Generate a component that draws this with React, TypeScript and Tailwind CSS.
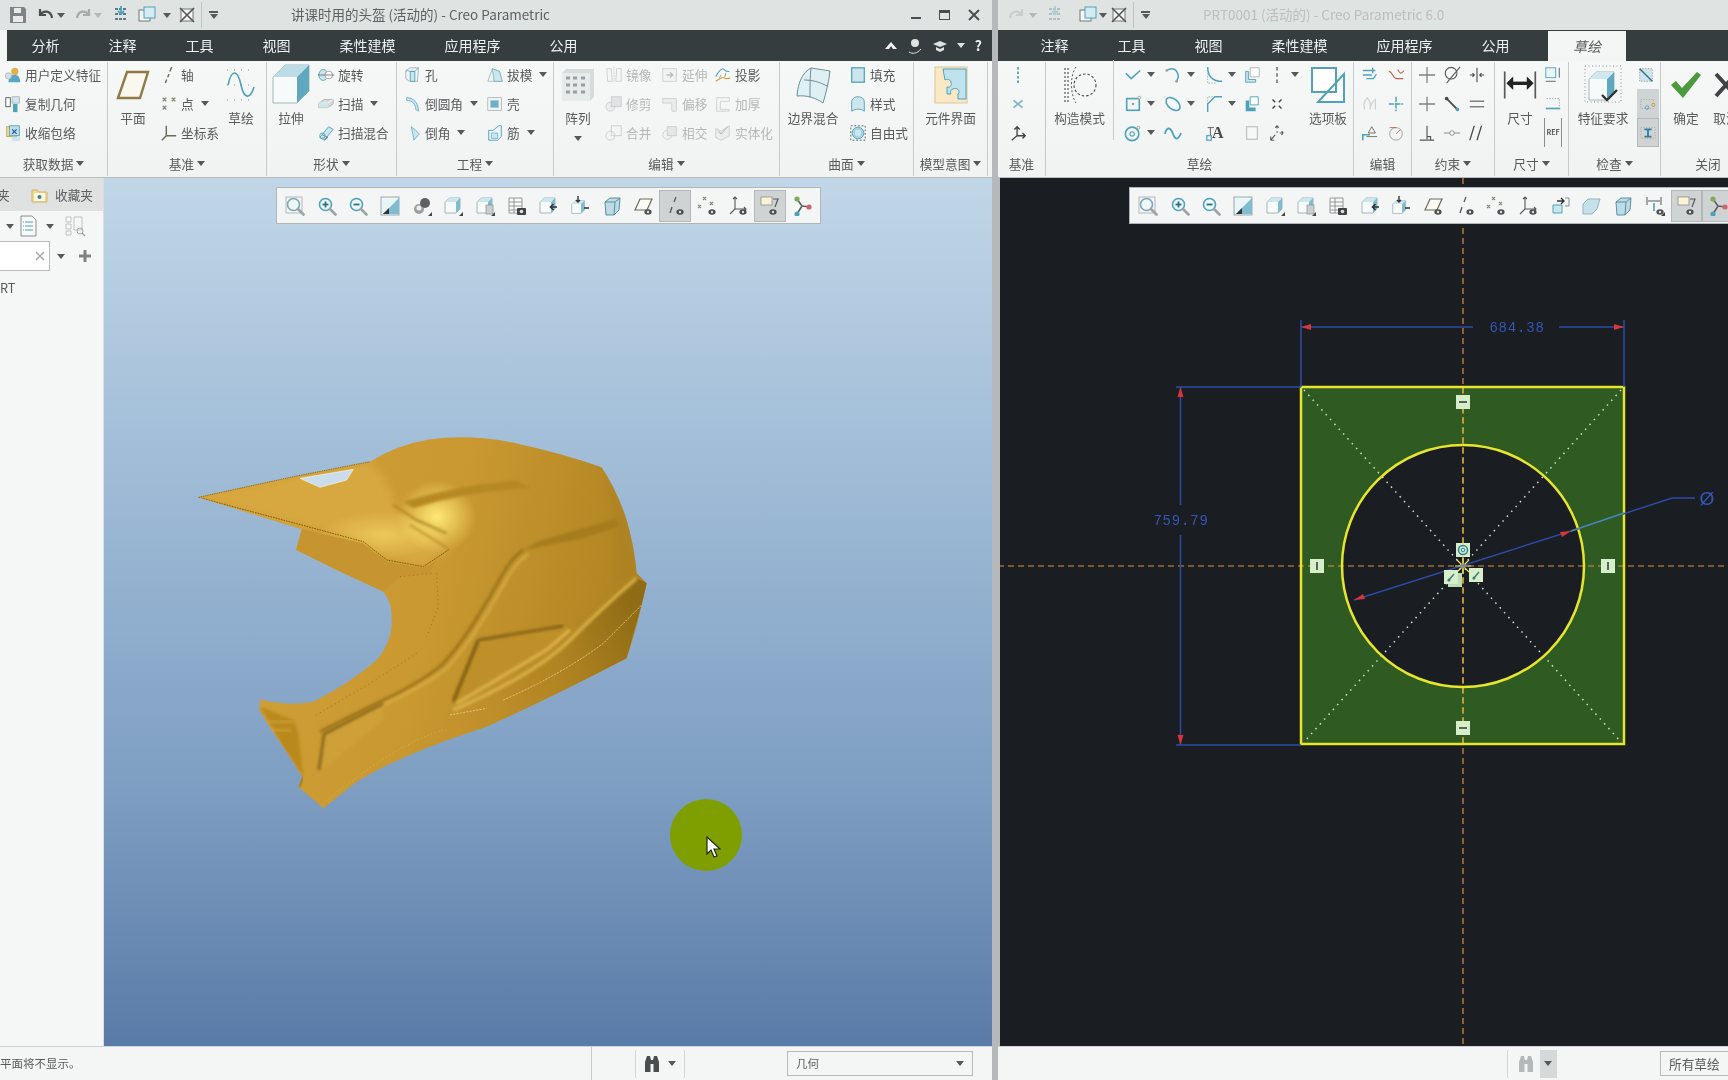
import type { ReactNode } from 'react'
import clsx from 'clsx'

const T = '#4fa2bb'
const L = '#cde6ee'
const D = '#55595a'
const G = '#9a9e9e'

function Svg({ s = 18, box = 20, children }: { s?: number; box?: number; children: ReactNode }) {
  return (
    <svg width={s} height={s} viewBox={`0 0 ${box} ${box}`} fill="none" className="shrink-0">
      {children}
    </svg>
  )
}

function Caret({ className }: { className?: string }) {
  return (
    <span
      className={clsx(
        'inline-block h-0 w-0 shrink-0 border-x-[4px] border-t-[5px] border-x-transparent border-t-[#55595a]',
        className,
      )}
    />
  )
}

const Eye = ({ x = 15, y = 16 }: { x?: number; y?: number }) => (
  <>
    <ellipse cx={x} cy={y} rx="3.6" ry="2.8" fill="#4a4e4f" />
    <circle cx={x} cy={y} r="1.2" fill="#dfe3e3" />
  </>
)
const Corner = () => <path d="M20 20h-4l4-4z" fill="#444" />
const Cube = () => (
  <>
    <path d="M2 6l4-4h11v11l-4 4H2z" fill="#f7fbfc" stroke="#8fa5ad" strokeWidth=".8" />
    <path d="M2 6l4-4h11l-4 4z" fill={L} />
    <path d="M13 6l4-4v11l-4 4z" fill="#7fbcd0" />
  </>
)
const Glass = ({ sign }: { sign?: '+' | '-' }) => (
  <>
    <circle cx="8.5" cy="8.5" r="6" fill="#eef7fa" stroke={sign ? T : '#7fa5b2'} strokeWidth="1.6" />
    <path d="M13 13l5.5 5.5" stroke="#9aa3a5" strokeWidth="2.6" strokeLinecap="round" />
    {sign && <path d="M5.5 8.5h6" stroke="#2b6f88" strokeWidth="1.8" />}
    {sign === '+' && <path d="M8.5 5.5v6" stroke="#2b6f88" strokeWidth="1.8" />}
  </>
)

const icons: Record<string, ReactNode> = {
  udf: (
    <>
      <circle cx="12" cy="6" r="4" fill="#e0b04a" />
      <path d="M5 18c0-6 3-8 7-8s6 3 6 8z" fill="#5aa6c4" />
      <circle cx="5" cy="11" r="3.5" fill="#cfe3ea" stroke={G} strokeWidth=".6" />
    </>
  ),
  copyGeom: (
    <>
      <rect x="2" y="3" width="5" height="10" fill="#fff" stroke={D} />
      <rect x="9" y="2" width="8" height="7" fill={L} stroke={G} strokeWidth=".7" />
      <rect x="10" y="10" width="5" height="9" fill={T} />
    </>
  ),
  shrink: (
    <>
      <rect x="3" y="3" width="11" height="11" fill="#f3dc9b" stroke="#c9a24c" />
      <rect x="6" y="2" width="11" height="11" fill="#bfe0ea" stroke={T} />
      <path d="M9 6l5 5M14 6l-5 5" stroke="#2a5a9c" strokeWidth="1.4" />
      <rect x="9" y="14" width="9" height="5" fill={L} />
    </>
  ),
  axis: <path d="M13 1l-2 5M10 9l-1.4 3.5M7.4 15l-1.4 4" stroke="#6d6a58" strokeWidth="1.6" />,
  point: <path d="M3 3l4 4M7 3l-4 4M13 3l4 4M17 3l-4 4M3 12l4 4M7 12l-4 4" stroke="#8c8a78" strokeWidth="1.5" />,
  csys: <path d="M7 2v11l-5 5M7 13h11" stroke="#6d6a58" strokeWidth="1.6" />,
  revolve: (
    <>
      <ellipse cx="7" cy="10" rx="5" ry="6" fill={L} stroke={T} />
      <rect x="9" y="6" width="8" height="8" rx="3" fill="#fff" stroke={G} />
      <path d="M1 10h18" stroke={D} strokeWidth=".8" />
    </>
  ),
  sweep: (
    <>
      <path d="M2 9l6-4h10v5l-6 4H2z" fill="#d6dadb" stroke={G} strokeWidth=".7" />
      <path d="M2 9h10l6-4" stroke="#fff" />
      <path d="M2 9v5h10V9z" fill={L} />
    </>
  ),
  blend: (
    <>
      <path d="M3 15L13 3l5 3L8 18z" fill={L} stroke={T} />
      <path d="M6 12l6 3-4 3" stroke={D} strokeWidth=".8" />
      <circle cx="6" cy="13" r="3" stroke={T} />
    </>
  ),
  hole: (
    <>
      <path d="M2 5l5-3h9l-1 15H6L2 14z" fill="#eef5f7" stroke={G} strokeWidth=".8" />
      <path d="M7 6h5v11H7z" fill={L} stroke={T} />
      <path d="M2 5l5 1 5 0 4-4" stroke={T} strokeWidth=".8" />
    </>
  ),
  round: (
    <>
      <path d="M3 3h8l6 6v9l-7-2-7-8z" fill="#f1f4f5" />
      <path d="M3 3c7 0 13 5 13 15l-3-2c0-6-4-10-10-10z" fill={L} stroke={T} strokeWidth=".8" />
    </>
  ),
  chamfer: (
    <>
      <path d="M3 8l5-5 9 7-6 8-8-5z" fill="#f1f4f5" />
      <path d="M8 3l4 3 5 5-6 7-1-6z" fill={L} stroke={T} strokeWidth=".8" />
    </>
  ),
  draft: (
    <>
      <path d="M2 17l5-14 8 3 3 11z" fill="#edf6f9" stroke={G} strokeWidth=".7" />
      <path d="M7 3l8 3 3 11H9z" fill={L} stroke={T} strokeWidth=".7" />
    </>
  ),
  shell: (
    <>
      <rect x="2" y="3" width="15" height="14" fill="#eef3f5" stroke={G} strokeWidth=".7" />
      <rect x="5" y="6" width="9" height="8" fill="#6fb0c6" />
    </>
  ),
  rib: (
    <>
      <path d="M3 7h5l6-5h3v12l-4 4H3z" fill="#eef5f7" stroke={T} />
      <path d="M6 10h7v6H6z" fill={L} stroke={T} strokeWidth=".7" />
    </>
  ),
  mirror: (
    <>
      <path d="M2 3h5l1 14H3zM12 17l1-14h5v14z" stroke={G} />
      <path d="M10 1v18" stroke={G} strokeDasharray="2 1" />
    </>
  ),
  trim: (
    <>
      <circle cx="6" cy="13" r="5" fill="#dfe3e3" stroke={G} />
      <rect x="7" y="2" width="11" height="11" fill="#c9cdce" stroke={G} />
    </>
  ),
  merge: (
    <>
      <circle cx="6" cy="13" r="5" stroke={G} />
      <rect x="7" y="2" width="11" height="11" stroke={G} />
    </>
  ),
  extend: (
    <>
      <rect x="2" y="3" width="15" height="14" fill="#eef0f0" stroke={G} />
      <path d="M6 10h7M10 7l3 3-3 3" stroke="#777" strokeWidth="1.4" />
    </>
  ),
  offset: <path d="M2 4h15v14h-5V9H2z" fill="#e1e4e4" stroke={G} />,
  intersect: (
    <>
      <circle cx="7" cy="12" r="5" stroke={G} />
      <rect x="7" y="3" width="10" height="10" fill="#d4d8d8" stroke={G} />
    </>
  ),
  project: (
    <>
      <path d="M2 12c3-7 7-9 8-9s2 4 7 3" stroke={T} strokeWidth="1.2" />
      <path d="M2 17c3-2 7-5 9-4s3 2 7 0" stroke="#d49a2d" strokeWidth="1.2" />
      <path d="M6 13l2-3M12 12l1-4" stroke={D} strokeWidth=".7" />
    </>
  ),
  thicken: <path d="M3 3h14v4H7v9h10v2H3z" stroke={G} />,
  solidify: (
    <>
      <path d="M2 5l6 3 9-6v11l-9 5-6-3z" fill="#e4e7e7" stroke={G} />
      <path d="M5 8l3 3 7-8" stroke="#888" strokeWidth="1.4" />
    </>
  ),
  fill: <rect x="3" y="2" width="14" height="16" fill={L} stroke={T} strokeWidth="1.4" />,
  style: <path d="M3 18V8c0-4 3-6 7-6s7 2 7 6v10c-4-3-10-3-14 0z" fill={L} stroke={T} />,
  free: (
    <>
      <rect x="2" y="2" width="16" height="16" stroke={D} strokeDasharray="2 2" />
      <circle cx="10" cy="10" r="6.5" fill="#a9d2e0" stroke={T} />
      <circle cx="10" cy="10" r="3.5" fill={L} />
    </>
  ),
  ln: <path d="M2 8l6 6 10-9" stroke={T} strokeWidth="1.8" />,
  arc3: (
    <>
      <path d="M3 5c6-4 12-2 13 7l-2 5" stroke={T} strokeWidth="1.6" />
      <circle cx="3" cy="5" r="1.5" fill={G} />
      <circle cx="14" cy="17" r="1.5" fill={G} />
    </>
  ),
  fillet: (
    <>
      <path d="M3 1c0 11 6 16 16 16" stroke={T} strokeWidth="1.6" />
      <path d="M3 8v11h9" stroke={G} strokeDasharray="1.5 1.5" />
    </>
  ),
  offs: (
    <>
      <path d="M8 2h10v10H8z" fill="#fff" stroke={G} strokeWidth=".8" />
      <path d="M3 6v12h11v-3H6V6z" fill={L} stroke={T} />
    </>
  ),
  cline: <path d="M10 1v4M10 8v4M10 15v4" stroke={D} strokeWidth="1.5" />,
  rect: (
    <>
      <rect x="3" y="4" width="14" height="13" stroke={T} strokeWidth="1.8" />
      <circle cx="10" cy="10" r="1.4" fill={G} />
      <circle cx="17" cy="3" r="1.6" fill="#fff" stroke={G} />
    </>
  ),
  ellipse: <ellipse cx="10" cy="10" rx="9" ry="5.5" transform="rotate(40 10 10)" stroke={T} strokeWidth="1.8" fill="#f4fafb" />,
  chamf: (
    <>
      <path d="M3 19V10l8-8h8" stroke={T} strokeWidth="1.6" />
      <path d="M3 10V2h8" stroke={G} strokeDasharray="1.5 1.5" />
    </>
  ),
  thick: (
    <>
      <path d="M8 2h9v9H8z" fill="#fff" stroke={T} />
      <path d="M3 6v12h11v-4H7V6z" fill={T} />
    </>
  ),
  ptX: <path d="M5 5l3 3M15 5l-3 3M5 15l3-3M15 15l-3-3" stroke="#444" strokeWidth="1.6" />,
  circle: (
    <>
      <circle cx="9" cy="11" r="7.5" stroke={T} strokeWidth="1.8" />
      <circle cx="9" cy="11" r="2.4" stroke={T} strokeWidth="1.2" />
      <circle cx="16" cy="4" r="1.6" fill="#fff" stroke={G} />
    </>
  ),
  wave: <path d="M1 11c2-8 6-8 9 0s6 6 9-1" stroke={T} strokeWidth="2" />,
  textA: (
    <>
      <path d="M3 4h7M6 4v9" stroke={D} />
      <rect x="2" y="13" width="5" height="5" fill="#fff" stroke={T} strokeWidth="1.4" />
    </>
  ),
  stack: <rect x="4" y="3" width="12" height="14" fill="#f6f8f8" stroke="#c5c9c9" strokeWidth="1.6" />,
  move: <path d="M10 2v3M10 8v2M13 10h3M17 10l-2-2M17 10l-2 2M8 12l-5 6M3 18v-4M3 18h4M8 4l2-2 2 2" stroke={D} strokeWidth="1.2" />,
  cdatum: <path d="M10 1v3M10 6v3M10 11v3M10 16v3" stroke={T} strokeWidth="2" />,
  cpoint: <path d="M5 6l10 8M15 6L5 14" stroke="#7fb5c8" strokeWidth="2" />,
  csys2: <path d="M9 3v10L3 18M9 13h9M6 6l3-3 3 3M15 10l3 3-3 3" stroke="#3f4344" strokeWidth="1.5" />,
  ed1: <path d="M2 5h14M2 10h10M6 14h8l3-5M13 2v6" stroke={T} strokeWidth="1.4" />,
  ed2: <path d="M2 6c4 0 5 8 8 8M10 14h8M12 4c2 4 3 6 7 1" stroke="#c0614f" strokeWidth="1.2" />,
  ed3: <path d="M4 16c-2-6 0-10 3-13 3 3 4 8 3 13M10 16c1-6 3-9 6-11v11" stroke="#cfd3d3" strokeWidth="1.4" />,
  ed4: <path d="M10 2v16M2 10h16" stroke={T} strokeWidth="1.6" strokeDasharray="6 1" />,
  ed5: (
    <>
      <path d="M2 18v-6h8" stroke={T} strokeWidth="1.8" />
      <path d="M8 10l4-7 4 7zM6 14h12" stroke="#6d6a58" strokeWidth="1" />
    </>
  ),
  ed6: (
    <>
      <circle cx="10" cy="11" r="7" stroke={G} />
      <path d="M10 11l5-5M3 4h7" stroke="#c0614f" />
    </>
  ),
  con1: <path d="M10 1v18M1 10h18" stroke="#7d8182" strokeWidth="1.4" />,
  con2: (
    <>
      <circle cx="9" cy="8" r="6.5" stroke="#55595a" strokeWidth="1.2" />
      <path d="M4 19L19 1" stroke="#55595a" strokeWidth="1.2" />
    </>
  ),
  con3: <path d="M10 2v16M2 10h5M18 10h-5M5 8l2 2-2 2M15 8l-2 2 2 2" stroke="#45494a" strokeWidth="1.2" />,
  con4: <path d="M1 10h18M10 2v16" stroke="#7d8182" strokeWidth="1.4" />,
  con5: (
    <>
      <path d="M3 3l14 14" stroke="#45494a" strokeWidth="2" />
      <circle cx="4" cy="4" r="2" fill="#45494a" />
      <circle cx="16" cy="16" r="2" fill={T} />
    </>
  ),
  con6: <path d="M2 7h16M2 13h16" stroke="#7d8182" strokeWidth="1.8" />,
  con7: <path d="M10 2v15M2 18h16M10 14h4v4" stroke="#55595a" strokeWidth="1.3" />,
  con8: (
    <>
      <path d="M1 10h18" stroke="#7d8182" />
      <circle cx="10" cy="10" r="2.5" fill="#fff" stroke="#7d8182" />
    </>
  ),
  con9: <path d="M7 2L2 18M15 2l-5 16" stroke="#45494a" strokeWidth="1.4" />,
  dim1: (
    <>
      <path d="M1 2v16M19 2v16" stroke={D} />
      <path d="M3 9h14" stroke="#222" strokeWidth="2" />
      <path d="M2 9l4-4v8zM18 9l-4-4v8z" fill="#222" />
    </>
  ),
  dim2: (
    <>
      <rect x="2" y="2" width="11" height="11" fill="#eaf5f8" stroke={T} />
      <path d="M17 2v11M2 17h11" stroke={D} />
    </>
  ),
  dim3: (
    <>
      <path d="M3 4h14v9" stroke={G} strokeDasharray="1.5 1.5" />
      <path d="M2 15h16" stroke={T} strokeWidth="1.8" />
    </>
  ),
  chk1: (
    <>
      <rect x="3" y="3" width="14" height="14" fill="#cfe5ec" stroke={G} strokeDasharray="1.5 1.5" />
      <path d="M3 3l14 14" stroke="#3a6d85" strokeWidth="1.6" />
    </>
  ),
  chk2: (
    <>
      <path d="M2 5h14v10H2z" stroke={G} strokeDasharray="1 2" />
      <circle cx="9" cy="14" r="2" stroke={T} />
      <circle cx="16" cy="11" r="1.8" stroke="#d49a2d" />
    </>
  ),
  chk3: (
    <>
      <path d="M2 4h16v12H2z" stroke={G} strokeDasharray="1 2" />
      <path d="M6 6h8M6 14h8M10 6v8" stroke="#2f7f9c" strokeWidth="2" />
    </>
  ),
  fit: (
    <>
      <rect x="1" y="1" width="16" height="16" fill="#f4f6f6" stroke="#b3b7b7" />
      <Glass />
    </>
  ),
  zin: <Glass sign="+" />,
  zout: <Glass sign="-" />,
  repaint: (
    <>
      <rect x="1" y="1" width="18" height="18" fill="#eaf5f8" stroke="#9aa7ab" />
      <path d="M19 2L3 18h16z" fill="#7fbcd0" />
      <path d="M9 12l-6 6h6z" fill="#333" />
    </>
  ),
  shade: (
    <>
      <circle cx="7" cy="13" r="5" fill="#9b9f9f" />
      <circle cx="13" cy="7" r="5" fill="#5d6162" />
      <circle cx="7" cy="12" r="2.5" fill="#eceeee" />
      <Corner />
    </>
  ),
  view: (
    <>
      <Cube />
      <Corner />
    </>
  ),
  viewdoc: (
    <>
      <Cube />
      <rect x="11" y="9" width="7" height="9" fill="#c9cfd0" stroke="#8a8e8e" strokeWidth=".7" />
      <Corner />
    </>
  ),
  table: (
    <>
      <path d="M2 2h13v15H2zM2 6h13M2 10h13M2 14h13M7 2v15" stroke="#8a8e8e" strokeWidth=".9" fill="#f7f8f8" />
      <rect x="10" y="12" width="9" height="7" rx="1" fill="#3f4344" />
      <circle cx="14.5" cy="15.5" r="1.8" fill="#dfe3e3" />
    </>
  ),
  cubeL: (
    <>
      <Cube />
      <path d="M13 11h6M15.500 8l-3 3 3 3" stroke="#333" strokeWidth="1.6" />
    </>
  ),
  cubeT: (
    <>
      <g transform="translate(0 3) scale(.85)">
        <Cube />
      </g>
      <path d="M8 0v6M6 4l2 2 2-2M14 12h5" stroke="#333" strokeWidth="1.4" />
    </>
  ),
  wire: (
    <>
      <path d="M3 6l5-4h10l-1 12-5 5H4z" fill="#bcdbe6" stroke="#5d8fa2" />
      <path d="M3 6h10l5-4M13 6l-1 13" stroke="#5d8fa2" />
    </>
  ),
  planeEye: (
    <>
      <path d="M2 14L7 3h12l-5 11z" stroke="#6a6a5a" strokeWidth="1.2" fill="#fbfaf4" />
      <Eye />
    </>
  ),
  axisEye: (
    <>
      <path d="M11 1L9 6M7 11l-2 6" stroke="#55595a" strokeWidth="1.3" />
      <Eye />
    </>
  ),
  ptEye: (
    <>
      <path d="M6 1l3 3M9 1L6 4M13 6l3 3M16 6l-3 3M1 9l3 3M4 9l-3 3" stroke="#8c8a78" strokeWidth="1.2" />
      <Eye />
    </>
  ),
  csysEye: (
    <>
      <path d="M7 1v12L2 18M7 13h11M5 3l2-2 2 2M16 11l2 2-2 2" stroke="#55595a" strokeWidth="1.1" />
      <Eye />
    </>
  ),
  annotEye: (
    <>
      <rect x="1" y="1" width="11" height="8" fill="#fbf3d6" stroke="#8a8e8e" strokeWidth=".8" />
      <path d="M13 3h5l-3 8" stroke="#55595a" strokeWidth="1.2" />
      <Eye x={13} />
    </>
  ),
  spin: (
    <>
      <path d="M10 10L5 3M10 10l8 1M10 10l-5 8" stroke="#5d6162" strokeWidth="1.6" />
      <circle cx="5" cy="3" r="2.6" fill="#7faa5a" />
      <circle cx="17" cy="11" r="2.6" fill="#d0656a" />
      <circle cx="5" cy="18" r="2.6" fill={T} />
    </>
  ),
  orient: (
    <>
      <path d="M3 9h9v8H3z" fill={L} stroke={T} />
      <path d="M7 5h7M11 2l3 3-3 3" stroke="#333" strokeWidth="1.4" />
      <path d="M15 2h4v8h-4" stroke="#8a8e8e" />
    </>
  ),
  section: <path d="M2 8l5-5h12l-3 10-5 5H2z" fill="#c6e1ea" stroke="#8fb5c2" />,
  dimEye: (
    <>
      <path d="M2 1v8M16 1v8M3 5h12" stroke="#55595a" />
      <path d="M9 7v8" stroke={T} strokeWidth="1.6" />
      <Eye />
      <Corner />
    </>
  ),
}

function Ico({ n, s = 18, off }: { n: string; s?: number; off?: boolean }) {
  return (
    <span className={clsx('flex shrink-0', off && 'opacity-45')}>
      <Svg s={s}>{icons[n]}</Svg>
    </span>
  )
}

function Group({
  label,
  arrow,
  className,
  children,
}: {
  label?: string
  arrow?: boolean
  className?: string
  children: ReactNode
}) {
  return (
    <div className={clsx('flex h-[114px] shrink-0 flex-col border-r border-[#c6cac9]', className)}>
      <div className="-mt-[2px] flex h-[91px]">{children}</div>
      <div className="flex flex-1 items-center justify-center gap-[3px]">
        {label}
        {arrow && <Caret />}
      </div>
    </div>
  )
}

function Small({
  n,
  text,
  arrow,
  off,
  gap = 'gap-[3px]',
}: {
  n: string
  text: string
  arrow?: boolean
  off?: boolean
  gap?: string
}) {
  return (
    <div className={clsx('flex h-[29px] items-center whitespace-nowrap', gap, off && 'text-[#b4b8b8]')}>
      <Ico n={n} off={off} />
      <span>{text}</span>
      {arrow && <Caret className="ml-[4px]" />}
    </div>
  )
}

function Big({
  icon,
  text,
  arrow,
  className,
}: {
  icon: ReactNode
  text: string
  arrow?: boolean
  className?: string
}) {
  return (
    <div className={clsx('flex shrink-0 flex-col items-center whitespace-nowrap pt-[4px]', className)}>
      <div className="flex h-[42px] items-center justify-center">{icon}</div>
      <span className="mt-[3px] leading-[18px]">{text}</span>
      {arrow && <Caret className="mt-[9px]" />}
    </div>
  )
}

function Col({ className, children }: { className?: string; children: ReactNode }) {
  return <div className={clsx('flex shrink-0 flex-col', className)}>{children}</div>
}

function Cell({ n, arrow, off }: { n?: string; arrow?: boolean; off?: boolean }) {
  return (
    <div className="flex h-[29px] items-center gap-[5px]">
      {n && <Ico n={n} off={off} />}
      {arrow && <Caret />}
    </div>
  )
}

function Tab({ children }: { children: ReactNode }) {
  return <span className="shrink-0 px-[24.5px] text-[14px] text-[#eef1f1]">{children}</span>
}

function ToolBtn({ n, on }: { n: string; on?: boolean }) {
  return (
    <div
      className={clsx(
        'flex h-[32px] w-[31.7px] shrink-0 items-center justify-center',
        on && 'border border-[#b4b8b8] bg-[#cfd3d3]',
      )}
    >
      <Ico n={n} s={20} />
    </div>
  )
}

function Toolbar({ items, on, className }: { items: string[]; on: string[]; className?: string }) {
  return (
    <div
      className={clsx(
        'absolute top-[9px] flex h-[37px] items-center border border-[#aeb6ba] bg-[#f4f6f6] px-[2px]',
        className,
      )}
    >
      {items.map((n) => (
        <ToolBtn key={n} n={n} on={on.includes(n)} />
      ))}
    </div>
  )
}

const Extrude = () => (
  <svg width="40" height="44" viewBox="0 0 40 44" fill="none">
    <path d="M2 14L14 2h24v26L26 40H2z" fill="#f6fafb" stroke="#a4b6bc" />
    <path d="M2 14L14 2h24L26 14z" fill="#bcdde8" />
    <path d="M26 14L38 2v26L26 40z" fill="#5fa8c0" />
  </svg>
)

const BigPlane = () => (
  <svg width="34" height="30" viewBox="0 0 34 30" fill="none">
    <path d="M2 28L11 2h21l-8 26z" fill="#faf8ee" stroke="#8d7a45" strokeWidth="2.4" />
  </svg>
)

const BigSketch = () => (
  <svg width="30" height="34" viewBox="0 0 30 34" fill="none">
    <path d="M2 17c4-18 10-14 13 0s9 15 13 2" stroke={T} strokeWidth="1.6" />
    <path d="M1 2h28M1 17h28M1 32h28" stroke="#8b8f8f" strokeWidth="1" strokeDasharray="1 6" />
  </svg>
)

const BigPattern = () => (
  <svg width="34" height="36" viewBox="0 0 34 36" fill="none">
    <path d="M1 6l4-4h28v28l-4 4H1z" fill="#d7dbdb" />
    <path d="M1 6h28v28H1z" fill="#e8ebeb" />
    <path d="M5 11h4M12 11h4M20 11h4M5 18h4M12 18h4M20 18h4M5 25h4M12 25h4M20 25h4" stroke="#9a9e9e" strokeWidth="3" />
  </svg>
)

const BigBoundary = () => (
  <svg width="36" height="38" viewBox="0 0 36 38" fill="none">
    <path d="M2 30C3 16 8 6 16 2c7 1 13 2 19 3-1 10-4 22-7 32-7-5-16-8-26-7z" fill="#dff0f5" stroke="#6f8d97" />
    <path d="M9 14c8 0 16 2 23 6M16 2c-1 9-1 18-1 29" stroke="#6f8d97" />
  </svg>
)

const BigPuzzle = () => (
  <svg width="34" height="38" viewBox="0 0 34 38" fill="none">
    <rect x="1" y="1" width="32" height="36" fill="#fbe9c5" stroke="#d9c69a" />
    <path d="M9 3h23v30H24v-5c3-3-1-7-5-5-3 1-3 3-2 5h-4v-7c3 1 5-1 4-5-1-3-4-3-6-2z" fill="#bfe3ee" stroke={T} />
  </svg>
)

const BigConstruct = () => (
  <svg width="36" height="38" viewBox="0 0 36 38" fill="none">
    <path d="M3 2v34M6 2v34" stroke="#555" strokeWidth="1.2" strokeDasharray="2 2" />
    <path d="M14 1C8 9 8 28 14 37" stroke="#555" strokeDasharray="2 2" />
    <circle cx="23" cy="19" r="11" stroke="#444" strokeWidth="1.1" strokeDasharray="2.500 2" />
  </svg>
)

const BigPalette = () => (
  <svg width="36" height="38" viewBox="0 0 36 38" fill="none">
    <rect x="2" y="2" width="24" height="24" fill="#fff" stroke={T} strokeWidth="2" />
    <path d="M34 8v28H8z" fill="#fff" stroke={T} strokeWidth="2" />
    <path d="M26 16v10H15" stroke={T} strokeWidth="2" />
  </svg>
)

const BigFeatReq = () => (
  <svg width="38" height="40" viewBox="0 0 38 40" fill="none">
    <rect x="1" y="1" width="36" height="36" stroke="#8a8e8e" strokeDasharray="1 2.500" />
    <path d="M5 14l7-7h18v21l-7 7H5z" fill="#f6fafb" stroke="#a4b6bc" />
    <path d="M23 14l7-7v21l-7 7z" fill="#5fa8c0" />
    <path d="M5 14l7-7h18l-7 7z" fill="#cfe7ef" />
    <path d="M18 30l5 5 10-10" stroke="#333" strokeWidth="2.4" />
  </svg>
)

const BigCheck = () => (
  <svg width="32" height="28" viewBox="0 0 32 28" fill="none">
    <path d="M1 14l5-4 6 7L27 1l4 3-18 23z" fill="#4c9a3c" />
  </svg>
)

const BigX = () => (
  <svg width="24" height="26" viewBox="0 0 24 26" fill="none">
    <path d="M2 2l20 22M22 2L2 24" stroke="#3f4344" strokeWidth="4" />
  </svg>
)

const Binoculars = () => (
  <svg width="16" height="18" viewBox="0 0 16 18" fill="none">
    <path d="M1 17V7l2-6h3l1 4h2l1-4h3l2 6v10H9.500V9h-3v8z" fill="currentColor" />
  </svg>
)

function TitleIcon({ kind, off }: { kind: 'save' | 'undo' | 'redo' | 'regen' | 'win' | 'close'; off?: boolean }) {
  return (
    <span className={clsx('flex w-[20px] shrink-0 justify-center', off && 'opacity-35')}>
      <svg width="18" height="18" viewBox="0 0 18 18" fill="none">
        {kind === 'save' && (
          <>
            <path d="M1 1h14l2 2v14H1z" fill="#7f8385" />
            <rect x="5" y="2" width="7" height="5" fill="#e8eaea" />
            <rect x="4" y="10" width="10" height="6" fill="#e8eaea" />
          </>
        )}
        {kind === 'undo' && <path d="M3 3v6h6M3 9c3-5 11-5 12 3" stroke="#4a4e4f" strokeWidth="2.2" />}
        {kind === 'redo' && <path d="M15 3v6H9M15 9c-3-5-11-5-12 3" stroke="#a6aaaa" strokeWidth="2.2" />}
        {kind === 'regen' && (
          <>
            <path d="M3 3h12M3 8h12M3 13h12" stroke="#5a7d8a" strokeWidth="2" strokeDasharray="3 1" />
            <path d="M9 0v8M6 5l3 3 3-3" stroke={T} strokeWidth="1.8" />
          </>
        )}
        {kind === 'win' && (
          <>
            <rect x="1" y="4" width="11" height="11" fill="#f3f5f5" stroke="#777" />
            <rect x="6" y="1" width="11" height="11" fill="#d5ebf2" stroke={T} />
          </>
        )}
        {kind === 'close' && (
          <>
            <rect x="3" y="3" width="12" height="12" fill="#f3f5f5" stroke="#777" />
            <path d="M2 2l14 14M16 2L2 16" stroke="#555" strokeWidth="1.6" />
          </>
        )}
      </svg>
    </span>
  )
}

function Helmet() {
  const body =
    'M85 262L370 200L600 155Q680 105 780 88Q900 72 1030 98Q1180 130 1295 172Q1340 240 1370 330Q1395 420 1400 490L1430 520Q1405 640 1370 745Q1150 860 950 950Q700 1030 560 1115L460 1195L385 1130L397 1100Q340 1010 295 945L268 900L270 868Q350 890 430 875Q540 820 620 750Q670 690 665 620Q665 575 640 545L500 480L378 420L395 358Z'
  return (
    <svg
      width="500"
      height="420"
      viewBox="0 0 1500 1260"
      className="absolute left-[66px] top-[232px]"
      fill="none"
    >
      <defs>
        <linearGradient id="hb" x1="0" y1="0" x2="1" y2="0.2">
          <stop offset="0" stopColor="#d3a23a" />
          <stop offset="0.6" stopColor="#c99830" />
          <stop offset="1" stopColor="#b08422" />
        </linearGradient>
        <radialGradient id="hl" cx="0.5" cy="0.5" r="0.5">
          <stop offset="0" stopColor="#ffe875" stopOpacity="1" />
          <stop offset="1" stopColor="#ffe875" stopOpacity="0" />
        </radialGradient>
        <linearGradient id="hback" gradientUnits="userSpaceOnUse" x1="840" y1="900" x2="1430" y2="650">
          <stop offset="0" stopColor="#c4932d" />
          <stop offset="0.55" stopColor="#b08422" />
          <stop offset="1" stopColor="#8f6b15" />
        </linearGradient>
        <filter id="soft">
          <feGaussianBlur stdDeviation="4" />
        </filter>
        <filter id="soft2">
          <feGaussianBlur stdDeviation="12" />
        </filter>
        <clipPath id="hc">
          <path d={body} />
        </clipPath>
      </defs>
      <path d={body} fill="url(#hb)" />
      <g clipPath="url(#hc)">
        <path d="M1295 172Q1340 240 1370 330L1400 490L1330 540L1340 330Z" fill="#ad8222" filter="url(#soft2)" />
        <path d="M1400 505L1432 520L1370 745Q1150 860 950 950Q880 975 800 1000L840 905Q1080 800 1190 700Q1300 590 1400 505Z" fill="url(#hback)" />
        <path d="M1400 505Q1300 590 1190 700Q1080 800 850 900" stroke="#dcb54c" strokeWidth="9" filter="url(#soft)" />
        <path d="M85 262L370 200L600 155L640 200L680 290L840 418L760 470L650 450L580 395L395 345Z" fill="#d8a83f" filter="url(#soft2)" />
        <ellipse cx="800" cy="320" rx="120" ry="110" fill="url(#hl)" />
        <ellipse cx="640" cy="375" rx="190" ry="70" fill="url(#hl)" opacity="0.5" />
        <path d="M395 358L580 400L650 455L760 475L800 450L780 490L690 500L640 545L500 480L378 420Z" fill="#c7952f" />
        <path d="M85 262L395 345L580 395L650 450L760 470L838 418" stroke="#7e5d10" strokeWidth="3" strokeDasharray="5 3" />
        <path d="M700 275Q860 225 1040 212L1085 235Q900 240 730 295Z" fill="#b68823" filter="url(#soft)" />
        <path d="M670 285L740 330L830 370" stroke="#a97e1e" strokeWidth="6" filter="url(#soft)" />
        <path d="M838 418L720 345" stroke="#b68823" strokeWidth="5" filter="url(#soft)" />
        <path d="M1340 325L1100 395L1060 420L1240 385L1345 350Z" fill="#a67c1e" filter="url(#soft)" />
        <path d="M1060 420Q1030 440 1005 480Q960 560 920 625Q860 720 810 770Q740 825 620 880L450 965" stroke="#8f6a14" strokeWidth="7" filter="url(#soft)" />
        <path d="M1075 432Q1048 450 1020 490Q975 570 935 635Q875 730 825 780Q750 835 630 890" stroke="#d9ad46" strokeWidth="7" filter="url(#soft)" />
        <path d="M920 690L1180 645L1200 660L1130 720L850 885L845 860Z" fill="#bf9029" />
        <path d="M925 690L1180 648" stroke="#76570f" strokeWidth="7" filter="url(#soft)" />
        <path d="M925 690L850 875" stroke="#76570f" strokeWidth="9" filter="url(#soft)" />
        <path d="M860 880L1130 720L1200 660" stroke="#e0b64e" strokeWidth="9" filter="url(#soft)" />
        <path d="M460 970L640 880L640 930L450 1085Z" fill="#cf9f38" filter="url(#soft)" />
        <path d="M640 880L462 972L447 1080" stroke="#6f5210" strokeWidth="6" filter="url(#soft)" />
        <path d="M270 890L370 930L385 970L400 1100L340 1010Z" fill="#b9891f" filter="url(#soft)" />
        <path d="M290 935H370M300 960L365 962" stroke="#dfb650" strokeWidth="3" filter="url(#soft)" />
        <path d="M385 1130L397 1100" stroke="#8f6a14" strokeWidth="8" filter="url(#soft)" />
        <path d="M460 1180Q520 1130 620 1060Q760 970 830 960" stroke="#e3c26a" strokeWidth="2" strokeDasharray="3 8" />
        <path d="M840 915L950 895M1000 870Q1180 790 1300 700L1420 580" stroke="#ecd48b" strokeWidth="2.500" strokeDasharray="6 4" />
        <path d="M800 490L805 590L770 680M690 500L790 490M740 730L600 820L430 920" stroke="#8a6512" strokeWidth="2.500" strokeDasharray="3 10" opacity="0.8" />
      </g>
      <path d="M390 205L550 178L530 210L450 232Z" fill="#cbdcec" stroke="#f4f4ea" strokeWidth="2" />
      <path d="M85 262L370 200L600 155" stroke="#8f6a14" strokeWidth="3" strokeDasharray="4 3" />
    </svg>
  )
}

function Sketch() {
  const blue = '#2c4ba6'
  const red = '#d8353b'
  return (
    <svg
      width="728"
      height="868"
      viewBox="1000 178 728 868"
      className="absolute inset-0"
      fill="none"
    >
      <path
        fillRule="evenodd"
        d="M1301 387H1624V744H1301ZM1463 445A121 121 0 1 0 1463.010 687A121 121 0 1 0 1463 445Z"
        fill="#2f5a22"
      />
      <path d="M1304 390L1621 742M1621 390L1304 742" stroke="#cfe0c8" strokeWidth="1.500" strokeDasharray="1.500 5" />
      <path d="M998 566H1728M1463 178V1046" stroke="#d9913f" strokeWidth="1.200" strokeDasharray="6 4" />
      <path d="M1463 387V744" stroke="#d9b83a" strokeWidth="1.200" strokeDasharray="6 4" />
      <rect x="1301" y="387" width="323" height="357" stroke="#e6e62e" strokeWidth="2.500" />
      <circle cx="1463" cy="566" r="121" stroke="#e6e62e" strokeWidth="2.500" />
      <path d="M1301 320V387M1624 320V387M1176 387H1301M1176 745H1301" stroke={blue} strokeWidth="1.500" />
      <path d="M1301 327H1473M1559 327H1624M1180.500 387V505M1180.500 535V745" stroke={blue} strokeWidth="1.500" />
      <path d="M1354 600L1571 531L1672 498H1695" stroke={blue} strokeWidth="1.500" />
      <path d="M1571 531L1624 513" stroke="#4a8a9c" strokeWidth="1.500" />
      <path d="M1301 327l10-3v6zM1624 327l-10-3v6zM1180.500 387l-3 10h6zM1180.500 745l-3-10h6zM1354 600l9-6 2 5zM1571 531l-9 6-2-5z" fill={red} />
      <text x="1517" y="332" textAnchor="middle" fill="#3555b4" className="font-['Liberation_Mono',monospace] text-[14px] tracking-[0.8px]">
        684.38
      </text>
      <text x="1181" y="525" textAnchor="middle" fill="#3555b4" className="font-['Liberation_Mono',monospace] text-[14px] tracking-[0.8px]">
        759.79
      </text>
      <text x="1707" y="505" textAnchor="middle" fill="#3555b4" className="font-['Liberation_Sans',sans-serif] text-[19px]">
        Ø
      </text>
      <g stroke="#2a3a2a" strokeWidth="1.500">
        <rect x="1456" y="395" width="14" height="14" fill="#d7eecb" stroke="none" />
        <path d="M1459 402h8" />
        <rect x="1456" y="721" width="14" height="14" fill="#d7eecb" stroke="none" />
        <path d="M1459 728h8" />
        <rect x="1310" y="559" width="14" height="14" fill="#d7eecb" stroke="none" />
        <path d="M1317 562v8" />
        <rect x="1601" y="559" width="14" height="14" fill="#d7eecb" stroke="none" />
        <path d="M1608 562v8" />
      </g>
      <path d="M1455 566h16M1463 558v16M1457 560l12 12M1469 560l-12 12" stroke="#e8e070" strokeWidth="1.200" />
      <circle cx="1463" cy="566" r="2.500" fill="#8a8f80" />
      <rect x="1456" y="543" width="14" height="14" fill="#d7eecb" />
      <circle cx="1463" cy="550" r="4.500" stroke="#2f7f9c" strokeWidth="1.500" />
      <circle cx="1463" cy="550" r="1.800" stroke="#2f7f9c" />
      <rect x="1448" y="573" width="14" height="14" fill="#bcdcb4" />
      <rect x="1444" y="570" width="14" height="14" fill="#d7eecb" />
      <rect x="1469" y="568" width="14" height="14" fill="#d7eecb" />
      <path d="M1448 581l6-7M1473 579l6-7" stroke="#3f7f78" strokeWidth="1.500" />
      <circle cx="1449" cy="580" r="1.500" fill="#3f7f78" />
      <circle cx="1474" cy="578" r="1.500" fill="#3f7f78" />
    </svg>
  )
}

export default function App() {
  return (
    <div className="flex h-[1080px] w-[1728px] overflow-hidden bg-[#f3f6f5] font-['Noto_Sans_CJK_SC','Noto_Sans',sans-serif] text-[12.700px] text-[#565a5a] blur-[0.35px]">
      {/* left window */}
      <div className="flex h-full w-[992px] shrink-0 flex-col overflow-hidden">
        <div className="flex h-[30px] shrink-0 items-center bg-[#dfe3e1] pl-[8px]">
          <TitleIcon kind="save" />
          <span className="w-[8px]" />
          <TitleIcon kind="undo" />
          <Caret className="ml-[1px]" />
          <span className="w-[8px]" />
          <TitleIcon kind="redo" />
          <Caret className="ml-[1px] opacity-30" />
          <span className="w-[9px]" />
          <TitleIcon kind="regen" />
          <span className="w-[6px]" />
          <TitleIcon kind="win" />
          <Caret className="ml-[6px]" />
          <span className="w-[6px]" />
          <TitleIcon kind="close" />
          <span className="mx-[4px] h-[26px] w-px bg-[#bfc3c2]" />
          <span className="ml-[3px] flex flex-col items-center gap-[1px]">
            <span className="h-[2px] w-[9px] bg-[#55595a]" />
            <Caret />
          </span>
          <span className="-mt-[2px] ml-[73px] whitespace-nowrap text-[13.500px] text-[#5d6161]">
            讲课时用的头盔 (活动的) - Creo Parametric
          </span>
          <div className="ml-auto flex items-center gap-[18px] pr-[12px] text-[#4a4e4f]">
            <span className="mt-[6px] h-[2px] w-[10px] bg-[#4a4e4f]" />
            <span className="h-[10px] w-[11px] border border-t-[3px] border-[#4a4e4f]" />
            <svg width="12" height="12" viewBox="0 0 12 12" fill="none">
              <path d="M1 1l10 10M11 1L1 11" stroke="#4a4e4f" strokeWidth="2" />
            </svg>
          </div>
        </div>
        <div className="flex h-[31px] shrink-0 items-center bg-[#353d3f]">
          <span className="h-full w-[7px] shrink-0 bg-[#f3f6f5]" />
          <Tab>分析</Tab>
          <Tab>注释</Tab>
          <Tab>工具</Tab>
          <Tab>视图</Tab>
          <Tab>柔性建模</Tab>
          <Tab>应用程序</Tab>
          <Tab>公用</Tab>
          <div className="ml-auto flex items-center gap-[10px] pr-[10px] text-[#eef1f1]">
            <svg width="12" height="8" viewBox="0 0 12 8">
              <path d="M6 0l6 7H8L6 4 4 7H0z" fill="#f3f6f5" />
            </svg>
            <svg width="16" height="18" viewBox="0 0 16 18" fill="none">
              <circle cx="8" cy="6" r="4" fill="#dfe3e1" />
              <path d="M2 15c3 2 8 2 12-3" stroke="#dfe3e1" />
            </svg>
            <svg width="14" height="12" viewBox="0 0 14 12">
              <path d="M7 1l7 3-7 3-7-3zM3 7l4 2 4-2v3l-4 2-4-2z" fill="#dfe3e1" />
            </svg>
            <Caret className="border-t-[#dfe3e1]" />
            <span className="text-[14px] font-bold">?</span>
          </div>
        </div>
        <div className="flex h-[117px] shrink-0 border-b border-[#b9bdbc] bg-gradient-to-b from-[#f6f8f7] to-[#f0f3f2] pt-px">
          <Group label="获取数据" arrow className="w-[108px] overflow-hidden">
            <Col className="pl-[4px]">
              <Small n="udf" text="用户定义特征" />
              <Small n="copyGeom" text="复制几何" />
              <Small n="shrink" text="收缩包络" />
            </Col>
          </Group>
          <Group label="基准" arrow className="w-[159px]">
            <Big icon={<BigPlane />} text="平面" className="w-[50px]" />
            <Col className="ml-[2px] w-[55px]">
              <Small n="axis" text="轴" />
              <Small n="point" text="点" arrow />
              <Small n="csys" text="坐标系" />
            </Col>
            <Big icon={<BigSketch />} text="草绘" className="w-[52px]" />
          </Group>
          <Group label="形状" arrow className="w-[130px]">
            <Big icon={<Extrude />} text="拉伸" className="w-[48px]" />
            <Col className="ml-[2px]">
              <Small n="revolve" text="旋转" />
              <Small n="sweep" text="扫描" arrow />
              <Small n="blend" text="扫描混合" />
            </Col>
          </Group>
          <Group label="工程" arrow className="w-[157px]">
            <Col className="ml-[7px] w-[82px]">
              <Small n="hole" text="孔" />
              <Small n="round" text="倒圆角" arrow />
              <Small n="chamfer" text="倒角" arrow />
            </Col>
            <Col>
              <Small n="draft" text="拔模" arrow />
              <Small n="shell" text="壳" />
              <Small n="rib" text="筋" arrow />
            </Col>
          </Group>
          <Group label="编辑" arrow className="w-[226px]">
            <Big icon={<BigPattern />} text="阵列" arrow className="w-[48px]" />
            <Col className="ml-[3px] w-[56px]">
              <Small n="mirror" text="镜像" off />
              <Small n="trim" text="修剪" off />
              <Small n="merge" text="合并" off />
            </Col>
            <Col className="w-[53px]">
              <Small n="extend" text="延伸" off />
              <Small n="offset" text="偏移" off />
              <Small n="intersect" text="相交" off />
            </Col>
            <Col>
              <Small n="project" text="投影" />
              <Small n="thicken" text="加厚" off />
              <Small n="solidify" text="实体化" off />
            </Col>
          </Group>
          <Group label="曲面" arrow className="w-[134px]">
            <Big icon={<BigBoundary />} text="边界混合" className="w-[66px]" />
            <Col className="ml-[3px]">
              <Small n="fill" text="填充" />
              <Small n="style" text="样式" />
              <Small n="free" text="自由式" />
            </Col>
          </Group>
          <Group label="模型意图" arrow className="w-[74px]">
            <Big icon={<BigPuzzle />} text="元件界面" className="w-full" />
          </Group>
        </div>
        <div className="flex min-h-0 flex-1">
          <div className="flex w-[104px] shrink-0 flex-col overflow-hidden border-r border-[#d9dedf] bg-[#f5f7f6]">
            <div className="flex h-[33px] shrink-0 items-center bg-[#dfe2e1] text-[#5d6161]">
              <span className="-ml-[3px] w-[34px] overflow-hidden whitespace-nowrap">夹</span>
              <svg width="17" height="16" viewBox="0 0 17 16" className="shrink-0">
                <path d="M1 3h5l2 2h8v10H1z" fill="#f1d98f" stroke="#d0b56a" />
                <rect x="3" y="6" width="11" height="8" fill="#fbf6e2" />
                <circle cx="8.500" cy="10" r="2" fill="#3f7f9c" />
              </svg>
              <span className="ml-[7px] whitespace-nowrap">收藏夹</span>
            </div>
            <div className="flex h-[30px] shrink-0 items-center pl-[6px]">
              <Caret />
              <svg width="17" height="22" viewBox="0 0 17 22" fill="none" className="ml-[6px]">
                <path d="M1 1h11l4 4v16H1z" fill="#f7f8f8" stroke="#8a8e8e" />
                <path d="M5 7h8M5 11h8M5 15h8M3 7h1M3 11h1M3 15h1" stroke={T} />
              </svg>
              <Caret className="ml-[9px]" />
              <svg width="22" height="22" viewBox="0 0 22 22" fill="none" className="ml-[10px] opacity-50">
                <path d="M2 2h5v5H2zM2 9h5v5H2zM2 16h5v4H2zM10 2h8v13h-8z" stroke="#8a8e8e" />
                <circle cx="16" cy="16" r="3" stroke="#555" />
                <path d="M18 18l3 3" stroke="#555" strokeWidth="1.500" />
              </svg>
            </div>
            <div className="flex h-[30px] shrink-0 items-center">
              <div className="flex h-[30px] w-[50px] items-center justify-end border border-l-0 border-[#b7bbbb] bg-white pr-[4px]">
                <svg width="10" height="10" viewBox="0 0 10 10" fill="none">
                  <path d="M1 1l8 8M9 1L1 9" stroke="#a4a8a8" strokeWidth="1.400" />
                </svg>
              </div>
              <Caret className="ml-[7px]" />
              <svg width="12" height="12" viewBox="0 0 12 12" className="ml-[14px]">
                <path d="M4.500 0h3v4.500H12v3H7.500V12h-3V7.500H0v-3h4.500z" fill="#7f8384" />
              </svg>
            </div>
            <div className="mt-[7px] text-[#565a5a]">RT</div>
          </div>
          <div className="relative min-w-0 flex-1 overflow-hidden bg-[linear-gradient(180deg,#c1d7e8_0%,#a6c1da_27%,#7f9fc3_69%,#5a7ba7_100%)]">
            <Toolbar
              className="left-[172px]"
              items={['fit', 'zin', 'zout', 'repaint', 'shade', 'view', 'viewdoc', 'table', 'cubeL', 'cubeT', 'wire', 'planeEye', 'axisEye', 'ptEye', 'csysEye', 'annotEye', 'spin']}
              on={['axisEye', 'annotEye']}
            />
            <Helmet />
            <div className="absolute left-[566px] top-[621px] h-[72px] w-[72px] rounded-full bg-[#7f9f00]" />
            <svg width="16" height="24" viewBox="0 0 16 24" className="absolute left-[602px] top-[658px]">
              <path d="M1 1v17l4-4 3 7 3-1-3-7h6z" fill="#fff" stroke="#1f2a10" strokeWidth="1.200" />
            </svg>
          </div>
        </div>
        <div className="flex h-[34px] shrink-0 items-center border-t border-[#cfd3d3] bg-[#f3f6f5] text-[11.500px]">
          <span className="w-[591px] shrink-0 whitespace-nowrap">平面将不显示。</span>
          <span className="h-full w-px bg-[#c6cac9]" />
          <div className="ml-[43px] flex h-[28px] w-[50px] items-center justify-center gap-[8px] border-x border-[#d5d9d9] text-[#4a4e4f]">
            <Binoculars />
            <Caret />
          </div>
          <div className="ml-[102px] flex h-[25px] w-[186px] items-center justify-between border border-[#b7bbbb] px-[8px] text-[#5d6161]">
            几何
            <Caret />
          </div>
        </div>
      </div>
      <div className="h-full w-[6px] shrink-0 bg-[#b5b9bb]" />
      {/* right window */}
      <div className="flex h-full min-w-0 flex-1 flex-col overflow-hidden">
        <div className="flex h-[30px] shrink-0 items-center bg-[#dfe3e1] pl-[8px]">
          <TitleIcon kind="redo" off />
          <Caret className="ml-[3px] opacity-30" />
          <span className="w-[8px]" />
          <TitleIcon kind="regen" off />
          <span className="w-[13px]" />
          <TitleIcon kind="win" />
          <Caret className="ml-[1px]" />
          <span className="w-[2px]" />
          <TitleIcon kind="close" />
          <span className="mx-[4px] h-[26px] w-px bg-[#bfc3c2]" />
          <span className="ml-[3px] flex flex-col items-center gap-[1px]">
            <span className="h-[2px] w-[9px] bg-[#55595a]" />
            <Caret />
          </span>
          <span className="-mt-[2px] ml-[53px] whitespace-nowrap text-[13.500px] text-[#bbbfbe]">
            PRT0001 (活动的) - Creo Parametric 6.0
          </span>
        </div>
        <div className="flex h-[31px] shrink-0 items-center bg-[#353d3f] pl-[18px]">
          <Tab>注释</Tab>
          <Tab>工具</Tab>
          <Tab>视图</Tab>
          <Tab>柔性建模</Tab>
          <Tab>应用程序</Tab>
          <Tab>公用</Tab>
          <span className="ml-[14px] mt-[1px] flex h-[30px] w-[78px] shrink-0 items-center justify-center bg-[#f3f6f5] text-[14px] italic text-[#565a5a]">
            草绘
          </span>
        </div>
        <div className="flex h-[117px] shrink-0 border-b border-[#b9bdbc] bg-gradient-to-b from-[#f6f8f7] to-[#f0f3f2] pt-px">
          <Group label="基准" className="w-[48px]">
            <Col className="ml-[11px]">
              <Cell n="cdatum" />
              <Cell n="cpoint" />
              <Cell n="csys2" />
            </Col>
          </Group>
          <Group label="草绘" className="w-[308px]">
            <div className="w-[68px] shrink-0">
              <Big icon={<BigConstruct />} text="构造模式" className="h-[80px] w-full border-r border-[#c6cac9]" />
            </div>
            <div className="ml-[10px] grid h-[87px] shrink-0 grid-cols-[40px_41px_38px_25px_34px] grid-rows-3">
              <Cell n="ln" arrow />
              <Cell n="arc3" arrow />
              <Cell n="fillet" arrow />
              <Cell n="offs" />
              <Cell n="cline" arrow />
              <Cell n="rect" arrow />
              <Cell n="ellipse" arrow />
              <Cell n="chamf" arrow />
              <Cell n="thick" />
              <Cell n="ptX" />
              <Cell n="circle" arrow />
              <Cell n="wave" />
              <div className="relative h-[29px] w-[20px]">
                <Cell n="textA" />
                <span className="absolute left-[7px] top-[3px] font-['Liberation_Serif',serif] text-[16px] font-bold text-[#45494a]">
                  A
                </span>
              </div>
              <Cell n="stack" />
              <Cell n="move" />
            </div>
            <Big icon={<BigPalette />} text="选项板" className="w-[52px]" />
          </Group>
          <Group label="编辑" className="w-[58px]">
            <div className="ml-[7px] grid h-[87px] shrink-0 grid-cols-[26px_26px] grid-rows-3">
              <Cell n="ed1" />
              <Cell n="ed2" />
              <Cell n="ed3" />
              <Cell n="ed4" />
              <Cell n="ed5" />
              <Cell n="ed6" />
            </div>
          </Group>
          <Group label="约束" arrow className="w-[83px]">
            <div className="ml-[6px] grid h-[87px] shrink-0 grid-cols-[25px_25px_25px] grid-rows-3">
              <Cell n="con1" />
              <Cell n="con2" />
              <Cell n="con3" />
              <Cell n="con4" />
              <Cell n="con5" />
              <Cell n="con6" />
              <Cell n="con7" />
              <Cell n="con8" />
              <Cell n="con9" />
            </div>
          </Group>
          <Group label="尺寸" arrow className="w-[74px]">
            <Big icon={<Svg s={34}>{icons.dim1}</Svg>} text="尺寸" className="w-[50px]" />
            <Col className="ml-[-1px]">
              <Cell n="dim2" />
              <Cell n="dim3" />
              <div className="flex h-[29px] w-[18px] items-center justify-center border-x border-[#8a8e8e] text-[7px] font-bold leading-none">
                REF
              </div>
            </Col>
          </Group>
          <Group label="检查" arrow className="w-[92px]">
            <Big icon={<BigFeatReq />} text="特征要求" className="w-[68px]" />
            <Col>
              <Cell n="chk1" />
              <div className="flex h-[29px] w-[22px] items-center justify-center bg-[#cfd3d3]">
                <Ico n="chk2" />
              </div>
              <div className="flex h-[29px] w-[22px] items-center justify-center border border-[#b4b8b8] bg-[#cfd3d3]">
                <Ico n="chk3" />
              </div>
            </Col>
          </Group>
          <Group label="关闭" className="w-[94px] border-r-0">
            <Big icon={<BigCheck />} text="确定" className="w-[50px]" />
            <Big icon={<BigX />} text="取消" className="w-[30px]" />
          </Group>
        </div>
        <div className="relative min-h-0 flex-1 overflow-hidden border-l-[2px] border-[#b5b9bb] bg-[#1a1d21]">
          <Sketch />
          <Toolbar
            className="left-[129px] w-[640px]"
            items={['fit', 'zin', 'zout', 'repaint', 'view', 'viewdoc', 'table', 'cubeL', 'cubeT', 'planeEye', 'axisEye', 'ptEye', 'csysEye', 'orient', 'section', 'wire', 'dimEye', 'annotEye', 'spin']}
            on={['annotEye', 'spin']}
          />
        </div>
        <div className="flex h-[34px] shrink-0 items-center border-t border-[#cfd3d3] bg-[#f3f6f5]">
          <span className="ml-[467px] h-full w-px bg-[#c6cac9]" />
          <div className="ml-[42px] flex h-[28px] w-[50px] items-center border-x border-[#d5d9d9] pl-[10px] text-[#b5b9b9]">
            <Binoculars />
            <span className="ml-[6px] flex h-full w-[16px] items-center justify-center bg-[#d5d9d9]">
              <Caret className="border-t-[#9a9e9e]" />
            </span>
          </div>
          <div className="ml-[103px] flex h-[25px] w-[90px] shrink-0 items-center whitespace-nowrap border border-[#b7bbbb] pl-[8px]">
            所有草绘
          </div>
        </div>
      </div>
    </div>
  )
}
